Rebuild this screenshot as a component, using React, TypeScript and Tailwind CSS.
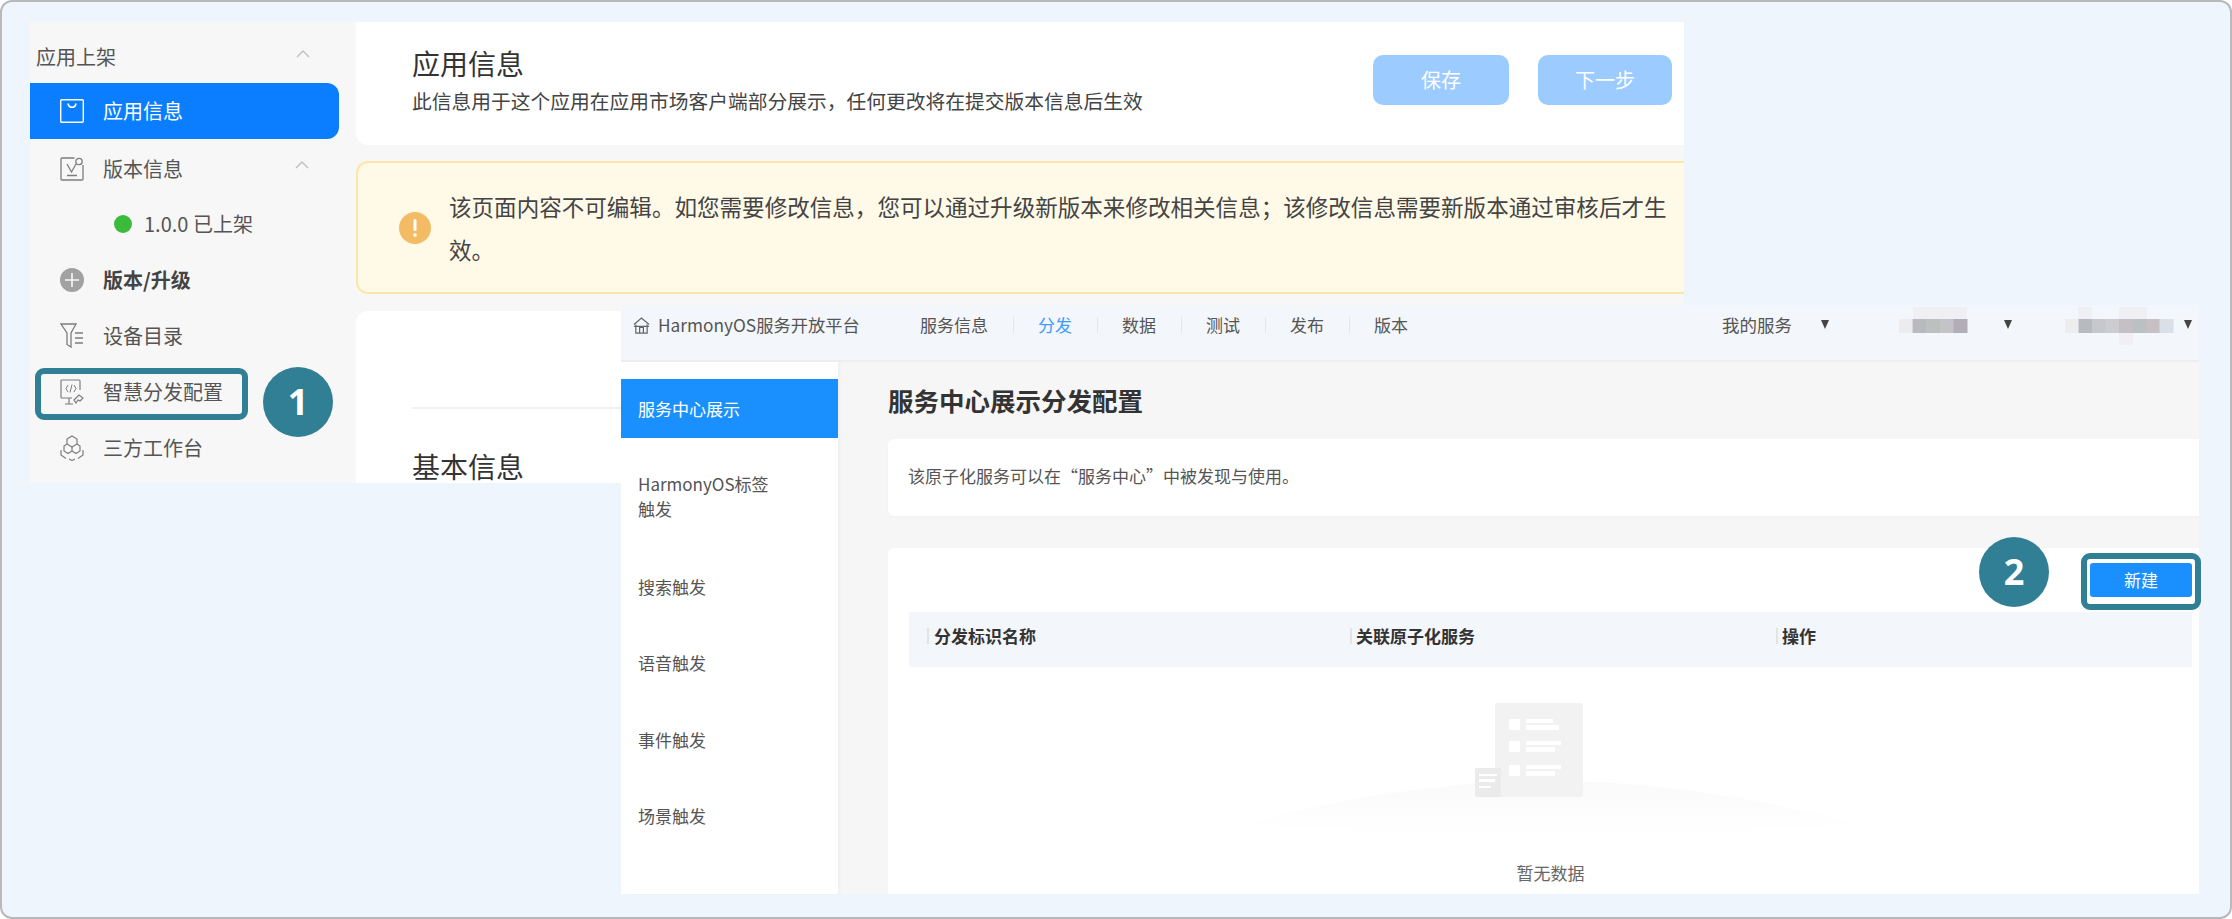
import type { ReactNode } from 'react';

const FONT = 'font-["Noto_Sans_CJK_SC","Liberation_Sans",sans-serif]';

function Chevron() {
    return (
        <svg viewBox="0 0 14 8" className="w-[14px] h-[8px]" fill="none" stroke="#c4c4c4" strokeWidth="1.5">
            <path d="M1 7 7 1l6 6" />
        </svg>
    );
}

function BagIcon() {
    return (
        <svg viewBox="0 0 24 24" className="w-6 h-6" fill="none" stroke="#fff" strokeWidth="1.4">
            <rect x="0.7" y="0.7" width="22.6" height="22.6" rx="1" />
            <path d="M8 4.5c.5 2.6 2 3.8 4 3.8s3.5-1.2 4-3.8" strokeWidth="1.6" />
        </svg>
    );
}

function VersionIcon() {
    return (
        <svg viewBox="0 0 24 24" className="w-6 h-6" fill="none" stroke="#7d7d7d" strokeWidth="1.3">
            <path d="M14.5 1H2a1 1 0 0 0-1 1v20a1 1 0 0 0 1 1h20a1 1 0 0 0 1-1V8" />
            <circle cx="19" cy="4.5" r="3.2" />
            <path d="M7 7l4.5 8L16 7M7 18.5h10" />
        </svg>
    );
}

function PlusIcon() {
    return (
        <svg viewBox="0 0 24 24" className="w-6 h-6">
            <circle cx="12" cy="12" r="12" fill="#a1a1a1" />
            <path d="M5 12h14M12 5v14" stroke="#f8f8f8" strokeWidth="1.6" />
        </svg>
    );
}

function FunnelIcon() {
    return (
        <svg viewBox="0 0 24 26" className="w-6 h-[26px]" fill="none" stroke="#7d7d7d" strokeWidth="1.3">
            <path d="M1 1h15l-5 9v14l-4-2.5V10z" />
            <path d="M15 10h8M15 15h8M15 20h8" />
        </svg>
    );
}

function DeployIcon() {
    return (
        <svg viewBox="0 0 24 26" className="w-6 h-[26px]" fill="none" stroke="#7d7d7d" strokeWidth="1.2">
            <path d="M12 19H2a1 1 0 0 1-1-1V2a1 1 0 0 1 1-1h17a1 1 0 0 1 1 1v9" />
            <path d="M5 25h8M9 19v6" />
            <path d="M8 6 6 9.5 8 13M14 6l2 3.5-2 3.5M12 5.5 10 13.5" strokeWidth="1" />
            <path d="M14 21l5-5 4 3-3 3-2-1-2 3z" />
        </svg>
    );
}

function CubesIcon() {
    return (
        <svg viewBox="0 0 24 26" className="w-6 h-[26px]" fill="none" stroke="#7d7d7d" strokeWidth="1.2">
            <path d="M12 1l5 3v5l-5 3-5-3V4z" />
            <path d="M7 9l-3 2v5l4 2.5 4-2.5 4 2.5 4-2.5v-5l-3-2M12 12v4" />
            <path d="M1 15v5l5 3.5M23 15v5l-5 3.5M9 24l3 1.5 3-1.5" />
        </svg>
    );
}

function HomeIcon() {
    return (
        <svg viewBox="0 0 18 18" className="w-[17px] h-[17px]" fill="none" stroke="#666" strokeWidth="1.3">
            <path d="M1 8l8-7 8 7" />
            <path d="M3 8v9h12V8" />
            <path d="M7 17v-6h4v6M1 10h16" />
        </svg>
    );
}

function NavRow({ icon, label, bold, chevron }: { icon: ReactNode; label: string; bold?: boolean; chevron?: boolean }) {
    return (
        <div className="h-14 pl-[30px] pr-[32px] flex items-center">
            <span className="w-6 flex justify-center mr-[19px]">{icon}</span>
            <span className={`text-[20px] ${bold ? 'font-bold text-[#444]' : 'text-[#555]'}`}>{label}</span>
            {chevron && (
                <span className="ml-auto -mt-2 mr-[-2px]">
                    <Chevron />
                </span>
            )}
        </div>
    );
}

// pixelated name in the top bar; extras are the faint blocks that bleed outside the row
function Mosaic({ width, cells, extras = [] }: { width: number; cells: string[]; extras?: number[][] }) {
    return (
        <svg width={width} height="14" viewBox={`0 0 ${width} 14`} className="block overflow-visible">
            {extras.map(([x, y, w, h], i) => (
                <rect key={i} x={x} y={y} width={w} height={h} fill="#f0f0f4" />
            ))}
            {cells.map((c, i) => (
                <rect key={c + i} x={i * (width / cells.length)} width={width / cells.length + 0.5} height="14" fill={c} />
            ))}
        </svg>
    );
}

function Caret() {
    return <span className="block w-0 h-0 border-x-[4.5px] border-x-transparent border-t-[9px] border-t-[#444] -mt-[2px]" />;
}

function Tab({ label, active, last }: { label: string; active?: boolean; last?: boolean }) {
    return (
        <div className="flex items-center">
            <span className={`text-[17px] ${active ? 'text-[#3f9cff]' : 'text-[#555]'}`}>{label}</span>
            {!last && <span className="w-px h-4 mx-[24.5px] bg-[#e3e6ea]" />}
        </div>
    );
}

function EmptyArt() {
    return (
        <svg width="600" height="130" viewBox="0 0 600 130" className="block">
            <defs>
                <linearGradient id="hill" x1="0" y1="0" x2="0" y2="1">
                    <stop offset="0" stopColor="#fafafa" />
                    <stop offset="1" stopColor="#ffffff" />
                </linearGradient>
            </defs>
            <path d="M0 120C90 95 200 78 300 78s210 17 300 42C500 135 100 135 0 120z" fill="url(#hill)" />
            <rect x="244" y="0" width="88" height="94" rx="2" fill="#f2f2f2" />
            <g fill="#fff">
                <rect x="258" y="16" width="11" height="11" />
                <rect x="275" y="16" width="27" height="4" />
                <rect x="275" y="22" width="33" height="5" />
                <rect x="258" y="38" width="11" height="11" />
                <rect x="275" y="38" width="35" height="4" />
                <rect x="275" y="44" width="29" height="5" />
                <rect x="258" y="62" width="11" height="11" />
                <rect x="275" y="62" width="35" height="4" />
                <rect x="275" y="68" width="29" height="5" />
            </g>
            <rect x="224" y="65" width="26" height="29" rx="1" fill="#ebebeb" />
            <g fill="#fff">
                <rect x="228" y="71" width="18" height="2" />
                <rect x="228" y="76" width="16" height="3" />
                <rect x="228" y="83" width="12" height="2" />
            </g>
        </svg>
    );
}

function Badge({ n, className }: { n: number; className: string }) {
    return (
        <div className={`absolute w-[70px] h-[70px] rounded-full bg-[#307f94] flex items-center justify-center text-white text-[36px] font-bold font-["Open_Sans",sans-serif] ${className}`}>
            {n}
        </div>
    );
}

export default function App() {
    return (
        <div className={`relative w-[2232px] h-[919px] overflow-hidden bg-white ${FONT}`}>
            <div className="w-full h-full border-2 border-[#b9b9b9] rounded-[12px] bg-[#eef5fc] pt-5 pl-7">
                {/* Back window: app info */}
                <div className="flex w-[1654px] h-[461px] bg-[#f7f7f7]">
                    <aside className="w-[326px] shrink-0 relative">
                        <div className="h-[61px] pl-[6px] pr-[48px] pt-[19px] flex items-start">
                            <span className="text-[20px] leading-[32px] text-[#555]">应用上架</span>
                            <span className="ml-auto mt-[9px] mr-[-2px]">
                                <Chevron />
                            </span>
                        </div>
                        <div className="w-[309px] h-14 pl-[30px] bg-[#0a7eff] rounded-r-[12px] flex items-center text-white">
                            <span className="mr-[19px]">
                                <BagIcon />
                            </span>
                            <span className="text-[20px]">应用信息</span>
                        </div>
                        <div className="mt-[2px]">
                            <div className="w-[309px]">
                                <NavRow icon={<VersionIcon />} label="版本信息" chevron />
                            </div>
                            <div className="h-[54px] pl-[84px] flex items-center">
                                <span className="w-[18px] h-[18px] rounded-full bg-[#3cba3c] mr-3" />
                                <span className="text-[20px] text-[#555]">1.0.0 已上架</span>
                            </div>
                            <div className="pt-px">
                                <NavRow icon={<PlusIcon />} label="版本/升级" bold />
                                <NavRow icon={<FunnelIcon />} label="设备目录" />
                                <NavRow icon={<DeployIcon />} label="智慧分发配置" />
                                <NavRow icon={<CubesIcon />} label="三方工作台" />
                            </div>
                        </div>
                    </aside>
                    <main className="flex-1 flex flex-col">
                        <section className="h-[123px] shrink-0 bg-white rounded-bl-[12px] pl-14 pr-3 flex items-center">
                            <div className="-mt-[8px]">
                                <h1 className="text-[28px] leading-[38px] font-normal text-[#333]">应用信息</h1>
                                <p className="text-[19.75px] leading-[28px] text-[#444] mt-[5px]">此信息用于这个应用在应用市场客户端部分展示，任何更改将在提交版本信息后生效</p>
                            </div>
                            <div className="ml-auto flex gap-[29px] -mt-[7px]">
                                <button className="w-[136px] h-[50px] rounded-[10px] bg-[#9ccbff] text-white text-[20px]">保存</button>
                                <button className="w-[134px] h-[50px] rounded-[10px] bg-[#9ccbff] text-white text-[20px]">下一步</button>
                            </div>
                        </section>
                        <section className="mt-4 h-[133px] shrink-0 bg-[#fff9e8] border-2 border-r-0 border-[#fde6a8] rounded-l-[12px] pl-[41px] flex items-center">
                            <svg viewBox="0 0 32 32" className="w-8 h-8 shrink-0 mr-[18px]">
                                <circle cx="16" cy="16" r="16" fill="#f3bb63" />
                                <rect x="14.5" y="7" width="3" height="12" rx="1.5" fill="#fff" />
                                <circle cx="16" cy="23" r="1.8" fill="#fff" />
                            </svg>
                            <p className="text-[22.55px] leading-[43px] text-[#444] pr-3">该页面内容不可编辑。如您需要修改信息，您可以通过升级新版本来修改相关信息；该修改信息需要新版本通过审核后才生效。</p>
                        </section>
                        <section className="mt-[17px] flex-1 bg-white rounded-tl-[12px] pl-14">
                            <div className="mt-[96px] h-0.5 bg-[#f0f0f0]" />
                            <h2 className="mt-[41px] text-[28px] leading-[32px] font-normal text-[#333]">基本信息</h2>
                        </section>
                    </main>
                </div>
            </div>

            {/* Front window: distribution config, laid over the back window */}
            <div className="absolute left-[621px] top-[305px] w-[1578px] h-[589px] flex flex-col bg-[#f6f6f6]">
                <header className="h-[57px] shrink-0 bg-[#f3f6fa] border-b-2 border-[#eeeeee] pb-[15px] pl-3 flex items-center">
                    <HomeIcon />
                    <span className="ml-2 w-[262px] text-[17.3px] text-[#555] whitespace-nowrap">HarmonyOS服务开放平台</span>
                    <Tab label="服务信息" />
                    <Tab label="分发" active />
                    <Tab label="数据" />
                    <Tab label="测试" />
                    <Tab label="发布" />
                    <Tab label="版本" last />
                    <span className="ml-[314px] text-[17.5px] text-[#555]">我的服务</span>
                    <span className="ml-[29px]">
                        <Caret />
                    </span>
                    <span className="ml-[70px] mt-px">
                        <Mosaic width={68} cells={['#ececee', '#b9b9c0', '#bcc0be', '#c4c4c8', '#b3adb8']} extras={[[14, -12, 54, 12]]} />
                    </span>
                    <span className="ml-[37px]">
                        <Caret />
                    </span>
                    <span className="ml-[53px] mt-px">
                        <Mosaic
                            width={108}
                            cells={['#ededee', '#b7bbbd', '#c6c8cd', '#cbcdd0', '#c5bfc6', '#b9c2c1', '#c8bfc5', '#d9e0e7']}
                            extras={[
                                [13, -12, 14, 12],
                                [54, -12, 28, 12],
                                [54, 14, 14, 12],
                            ]}
                        />
                    </span>
                    <span className="ml-[10.5px]">
                        <Caret />
                    </span>
                </header>
                <div className="flex-1 flex min-h-0">
                    <nav className="w-[217px] shrink-0 bg-white pt-[17px] shadow-[2px_0_2px_#f0f0f0] text-[17px] leading-[25px] text-[#555]">
                        <div className="h-[59px] pl-[17px] flex items-center bg-[#1a90ff] text-white">服务中心展示</div>
                        <div className="mt-[33px] pl-[17px] w-[150px] h-[50px]">HarmonyOS标签触发</div>
                        <div className="mt-[53px] pl-[17px]">搜索触发</div>
                        <div className="mt-[51px] pl-[17px]">语音触发</div>
                        <div className="mt-[52px] pl-[17px]">事件触发</div>
                        <div className="mt-[51px] pl-[17px]">场景触发</div>
                    </nav>
                    <main className="flex-1 pl-[50px] flex flex-col min-w-0">
                        <h2 className="h-[77px] shrink-0 pt-[21px] text-[25.5px] leading-[34px] font-bold text-[#333]">服务中心展示分发配置</h2>
                        <div className="h-[77px] shrink-0 bg-white rounded-l-[6px] pl-5 pb-1 flex items-center text-[17px] text-[#555] shadow-[0_1px_2px_#f0f0f0]">该原子化服务可以在“服务中心”中被发现与使用。</div>
                        <section className="mt-8 flex-1 bg-white rounded-tl-[6px] pl-[21px] pr-[7px] pt-[15px] min-h-0">
                            <div className="flex justify-end">
                                <button className="w-[102px] h-[34px] rounded-[3px] bg-[#1a90ff] text-white text-[17px]">新建</button>
                            </div>
                            <div className="mt-[15px] h-[55px] bg-[#f3f6fa] flex items-center pb-[7px] text-[17px] font-bold text-[#333]">
                                <span className="w-[441px] pl-[18px] flex items-center">
                                    <span className="w-0.5 h-4 bg-[#e3e3e3] mr-[5px]" />
                                    分发标识名称
                                </span>
                                <span className="w-[426px] flex items-center">
                                    <span className="w-0.5 h-4 bg-[#e3e3e3] mr-1" />
                                    关联原子化服务
                                </span>
                                <span className="flex items-center">
                                    <span className="w-0.5 h-4 bg-[#e3e3e3] mr-1" />
                                    操作
                                </span>
                            </div>
                            <div className="flex flex-col items-center pl-px pr-px pt-[36px]">
                                <EmptyArt />
                                <span className="mt-[28px] text-[17px] leading-[24px] text-[#666]">暂无数据</span>
                            </div>
                        </section>
                    </main>
                </div>
            </div>

            {/* Callouts */}
            <div className="absolute left-[35px] top-[368px] w-[213px] h-[52px] rounded-[9px] border-[6px] border-[#307f94]" />
            <Badge n={1} className="left-[263px] top-[367px]" />
            <div className="absolute left-[2081px] top-[553px] w-[120px] h-[57px] rounded-[9px] border-[6px] border-[#307f94]" />
            <Badge n={2} className="left-[1979px] top-[537px]" />
        </div>
    );
}
